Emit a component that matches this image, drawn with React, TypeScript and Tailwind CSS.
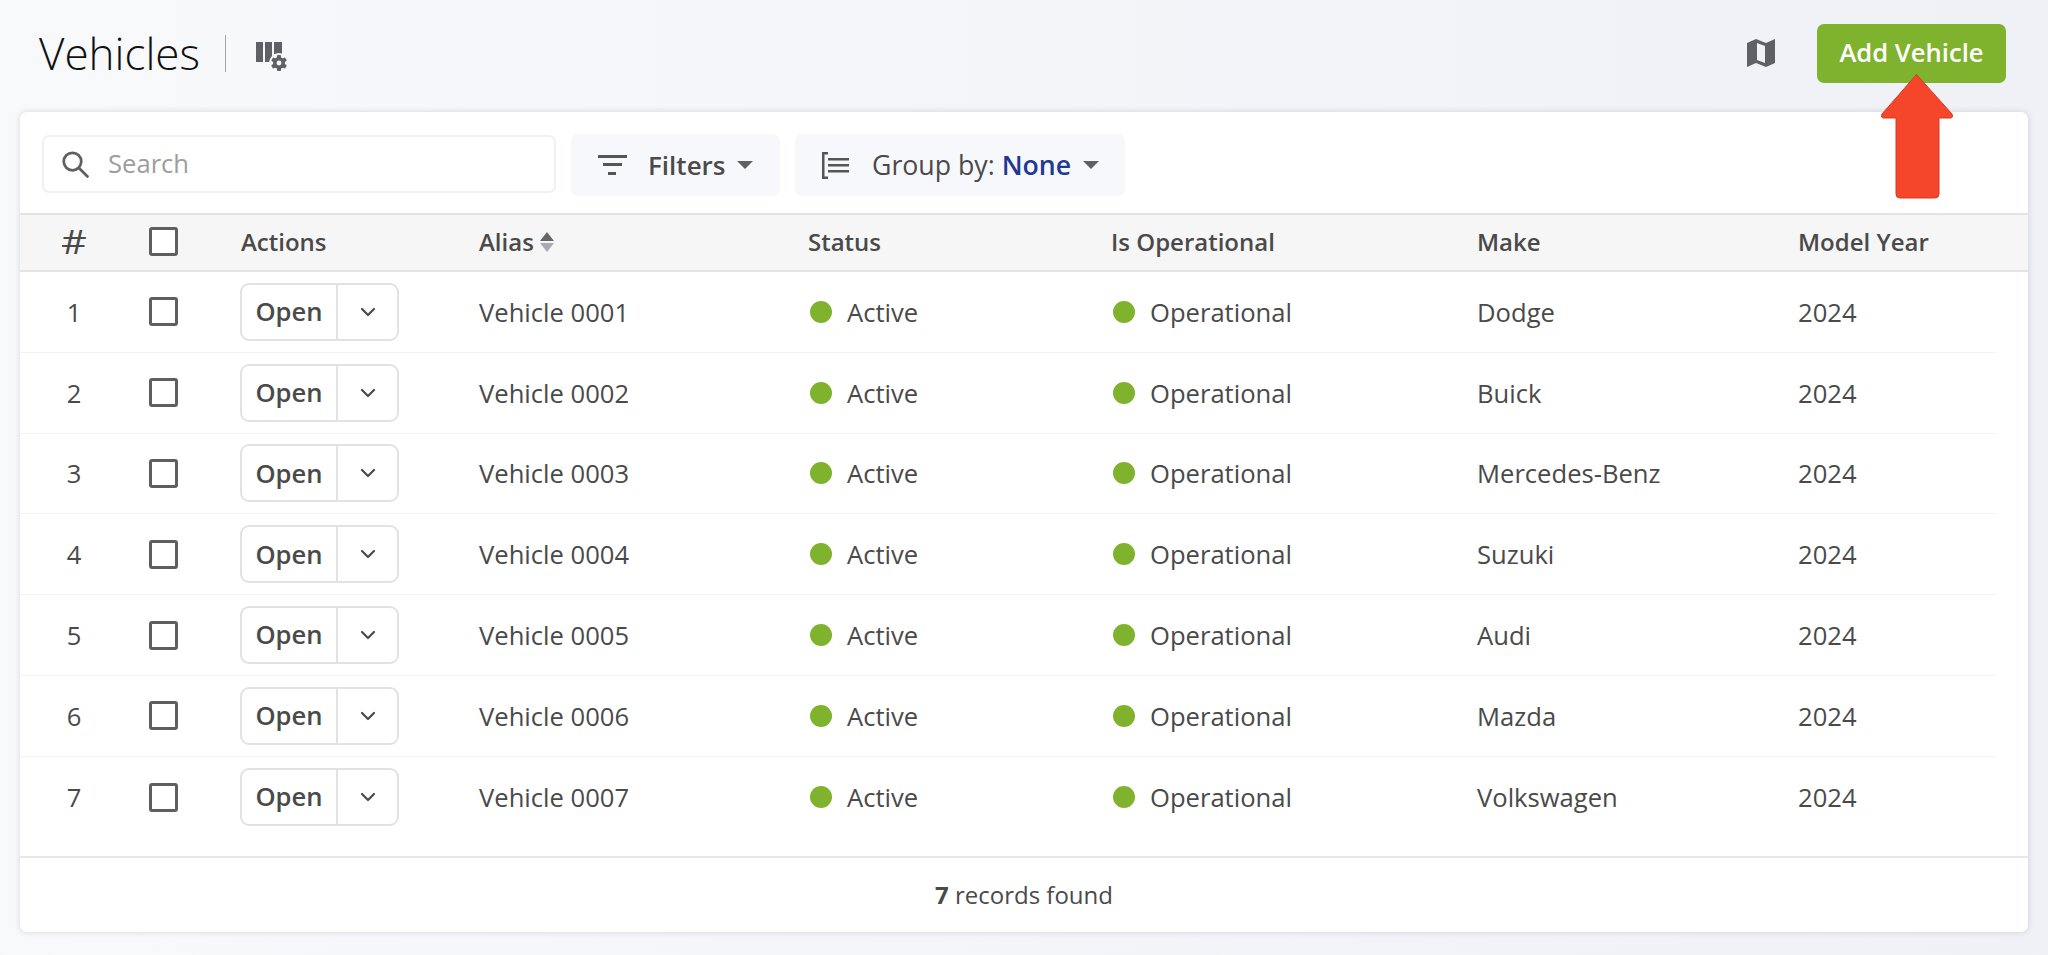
import { ChevronDown } from 'lucide-react';

const vehicles = [
  { id: 1, alias: 'Vehicle 0001', make: 'Dodge' },
  { id: 2, alias: 'Vehicle 0002', make: 'Buick' },
  { id: 3, alias: 'Vehicle 0003', make: 'Mercedes-Benz' },
  { id: 4, alias: 'Vehicle 0004', make: 'Suzuki' },
  { id: 5, alias: 'Vehicle 0005', make: 'Audi' },
  { id: 6, alias: 'Vehicle 0006', make: 'Mazda' },
  { id: 7, alias: 'Vehicle 0007', make: 'Volkswagen' },
];

const cols = 'grid grid-cols-[108px_71px_280px_329px_303px_366px_321px_1fr] items-center';

function Checkbox() {
  return <div className="w-[29px] h-[29px] rounded-[3px] border-[3px] border-[#5f5f5f] bg-white mx-auto" />;
}

function Dot({ label }: { label: string }) {
  return (
    <div className="flex items-center gap-[15px] pl-[2px]">
      <span className="w-[22px] h-[22px] rounded-full bg-[#7fb32e]" />
      <span className="pt-[2px]">{label}</span>
    </div>
  );
}

export default function App() {
  return (
    <div className="w-[2048px] h-[955px] overflow-hidden bg-gradient-to-r from-[#f8f9fb] to-[#eff1f7] font-['Open_Sans',sans-serif] text-[#4a4a4a] text-[25.6px]">
      {/* Cabecera */}
      <div className="h-[112px] pl-[39px] pr-[42px] pb-[6px] flex items-center">
        <h1 className="text-[44px] font-light text-[#111] leading-none">Vehicles</h1>
        <div className="w-px h-[37px] bg-[#a5a5a8] ml-[25px] mr-[29px]" />
        <svg width="32" height="32" viewBox="0 0 32 32" className="mt-[8px]">
          <path d="M1 1h7v20H1zM10 1h7v20h-7zM19 1h8v12h-8z" fill="#606167" />
          <circle cx="24" cy="22" r="10" fill="#f7f8fa" />
          <g fill="#606167">
            <rect x="22" y="14" width="4" height="16" rx="1" />
            <rect x="22" y="14" width="4" height="16" rx="1" transform="rotate(60 24 22)" />
            <rect x="22" y="14" width="4" height="16" rx="1" transform="rotate(120 24 22)" />
            <circle cx="24" cy="22" r="6" />
          </g>
          <circle cx="24" cy="22" r="2.4" fill="#f7f8fa" />
        </svg>
        <div className="ml-auto flex items-center">
          <svg width="30" height="30" viewBox="0 0 30 30" className="mr-[41px]">
            <path d="M1 5l9-4 10 4 9-4v24l-9 4-10-4-9 4z" fill="#606167" />
            <path d="M11 5l8 3v17l-8-3z" fill="#f1f2f6" />
          </svg>
          <button className="w-[189px] h-[59px] rounded-[7px] bg-[#7fb32e] text-white text-[25.6px] font-semibold">Add Vehicle</button>
        </div>
      </div>

      {/* Tabla */}
      <div className="mx-[20px] w-[2008px] h-[820px] bg-white rounded-[7px] shadow-[0_0_6px_rgba(0,0,0,0.14)] overflow-hidden flex flex-col">
        <div className="h-[101px] pl-[22px] pt-[22px] flex items-start gap-[15px]">
          <div className="mt-[1px] w-[514px] h-[58px] rounded-[7px] border-2 border-[#f0f1f3] flex items-center pl-[16px] gap-[18px]">
            <svg width="30" height="30" viewBox="0 0 24 24" fill="none" stroke="#606060" strokeWidth="2.2" strokeLinecap="round">
              <circle cx="10" cy="10" r="7" />
              <path d="M15 15l7 7" />
            </svg>
            <span className="text-[#9d9d9d]">Search</span>
          </div>
          <div className="w-[209px] h-[62px] rounded-[7px] bg-[#f7f8fc] flex items-center pl-[27px] text-[26px] font-semibold">
            <svg width="29" height="22" viewBox="0 0 29 22" fill="#555">
              <rect x="0" y="1" width="29" height="3" />
              <rect x="5" y="9" width="19" height="3" />
              <rect x="10" y="18" width="8" height="3" />
            </svg>
            <span className="ml-[21px]">Filters</span>
            <span className="ml-[11px] w-0 h-0 border-x-[8px] border-x-transparent border-t-[8px] border-t-[#606060]" />
          </div>
          <div className="w-[330px] h-[62px] rounded-[7px] bg-[#f7f8fc] flex items-center pl-[27px] text-[26.7px]">
            <svg width="27" height="27" viewBox="0 0 27 27" fill="#555">
              <rect x="0" y="0" width="2.5" height="27" />
              <rect x="0" y="0" width="6" height="2.5" />
              <rect x="0" y="24.5" width="6" height="2.5" />
              <rect x="6" y="6" width="21" height="2.5" />
              <rect x="6" y="12" width="21" height="2.5" />
              <rect x="6" y="18" width="21" height="2.5" />
            </svg>
            <span className="ml-[23px]">Group by: <span className="text-[#1f3a93] font-semibold text-[26.7px]">None</span></span>
            <span className="ml-[12px] w-0 h-0 border-x-[8px] border-x-transparent border-t-[8px] border-t-[#606060]" />
          </div>
        </div>

        <div className={`${cols} h-[59px] pb-[2px] bg-[#f6f6f6] border-y-2 border-[#e3e3e3] font-semibold text-[24px] text-[#4a4a4a]`}>
          <div className="text-center text-[32px] font-normal scale-x-125">#</div>
          <Checkbox />
          <div className="pl-[42px]">Actions</div>
          <div className="flex items-center gap-[6px]">
            Alias
            <span className="flex flex-col gap-[2px]">
              <span className="w-0 h-0 border-x-[7px] border-x-transparent border-b-[9px] border-b-[#666]" />
              <span className="w-0 h-0 border-x-[7px] border-x-transparent border-t-[9px] border-t-[#a7abb5]" />
            </span>
          </div>
          <div>Status</div>
          <div>Is Operational</div>
          <div>Make</div>
          <div>Model Year</div>
        </div>

        {vehicles.map((v) => (
          <div key={v.id} className={`${cols} h-[80.8px] mr-[32px] ${v.id < 7 ? 'border-b border-[#f3f3f3]' : ''}`}>
            <div className="text-center pt-[2px]">{v.id}</div>
            <Checkbox />
            <div className="pl-[41px]">
              <div className="w-[159px] h-[58px] rounded-[9px] border-2 border-[#e2e2e2] flex items-center">
                <span className="w-[94px] pt-[1px] text-center font-semibold">Open</span>
                <span className="h-full border-l-2 border-[#e2e2e2] flex-1 flex items-center justify-center">
                  <ChevronDown size={24} strokeWidth={2.2} />
                </span>
              </div>
            </div>
            <div className="pt-[2px]">{v.alias}</div>
            <Dot label="Active" />
            <Dot label="Operational" />
            <div className="pt-[2px]">{v.make}</div>
            <div className="pt-[2px]">2024</div>
          </div>
        ))}

        <div className="mt-auto h-[76px] border-t-2 border-[#e8e8e8] flex items-center justify-center text-[24px]">
          <span><b className="font-bold">7</b> records found</span>
        </div>
      </div>

      {/* Flecha roja */}
      <svg width="76" height="126" viewBox="0 0 76 126" className="absolute left-[1879px] top-[73px]">
        <path d="M37.5 1.5L73 41q2 4-2 4H60v76q0 4-4 4H21q-4 0-4-4V45H5q-4 0-2-4z" fill="#f5452a" stroke="#d93a22" strokeWidth="1" />
      </svg>
    </div>
  );
}
